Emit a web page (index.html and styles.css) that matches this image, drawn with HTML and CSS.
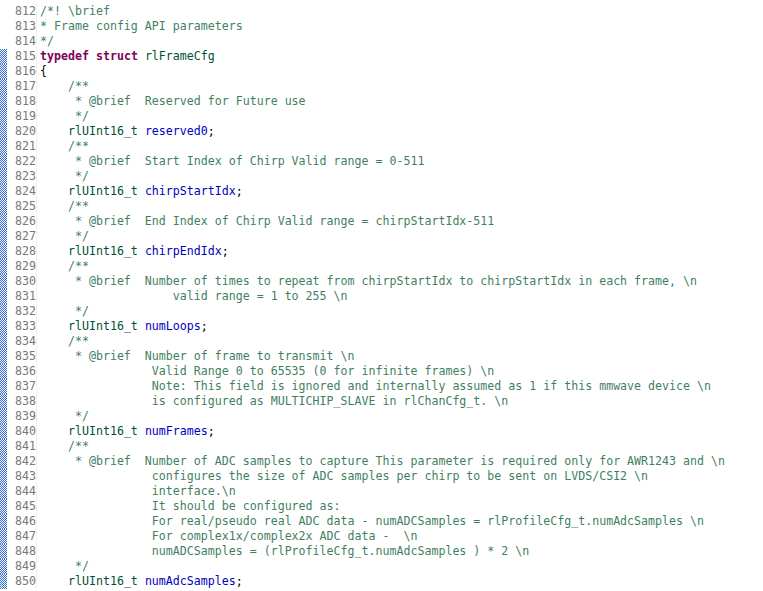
FILE: index.html
```html
<!DOCTYPE html>
<html>
<head>
<meta charset="utf-8">
<link rel="stylesheet" href="styles.css">
</head>
<body>
<div class="listing">
<div class="line"><span class="mark"></span><span class="num">812</span><span class="code"><span class="c">/*! \brief</span></span></div>
<div class="line"><span class="mark"></span><span class="num">813</span><span class="code"><span class="c">* Frame config API parameters</span></span></div>
<div class="line"><span class="mark"></span><span class="num">814</span><span class="code"><span class="c">*/</span></span></div>
<div class="line hl"><span class="mark"></span><span class="num">815</span><span class="code"><span class="k">typedef</span> <span class="k">struct</span> <span class="t">rlFrameCfg</span></span></div>
<div class="line hl"><span class="mark"></span><span class="num">816</span><span class="code">{</span></div>
<div class="line hl"><span class="mark"></span><span class="num">817</span><span class="code"><span class="c">    /**</span></span></div>
<div class="line hl"><span class="mark"></span><span class="num">818</span><span class="code"><span class="c">     * @brief  Reserved for Future use</span></span></div>
<div class="line hl"><span class="mark"></span><span class="num">819</span><span class="code"><span class="c">     */</span></span></div>
<div class="line hl"><span class="mark"></span><span class="num">820</span><span class="code">    <span class="t">rlUInt16_t</span> <span class="f">reserved0</span>;</span></div>
<div class="line hl"><span class="mark"></span><span class="num">821</span><span class="code"><span class="c">    /**</span></span></div>
<div class="line hl"><span class="mark"></span><span class="num">822</span><span class="code"><span class="c">     * @brief  Start Index of Chirp Valid range = 0-511</span></span></div>
<div class="line hl"><span class="mark"></span><span class="num">823</span><span class="code"><span class="c">     */</span></span></div>
<div class="line hl"><span class="mark"></span><span class="num">824</span><span class="code">    <span class="t">rlUInt16_t</span> <span class="f">chirpStartIdx</span>;</span></div>
<div class="line hl"><span class="mark"></span><span class="num">825</span><span class="code"><span class="c">    /**</span></span></div>
<div class="line hl"><span class="mark"></span><span class="num">826</span><span class="code"><span class="c">     * @brief  End Index of Chirp Valid range = chirpStartIdx-511</span></span></div>
<div class="line hl"><span class="mark"></span><span class="num">827</span><span class="code"><span class="c">     */</span></span></div>
<div class="line hl"><span class="mark"></span><span class="num">828</span><span class="code">    <span class="t">rlUInt16_t</span> <span class="f">chirpEndIdx</span>;</span></div>
<div class="line hl"><span class="mark"></span><span class="num">829</span><span class="code"><span class="c">    /**</span></span></div>
<div class="line hl"><span class="mark"></span><span class="num">830</span><span class="code"><span class="c">     * @brief  Number of times to repeat from chirpStartIdx to chirpStartIdx in each frame, \n</span></span></div>
<div class="line hl"><span class="mark"></span><span class="num">831</span><span class="code"><span class="c">                   valid range = 1 to 255 \n</span></span></div>
<div class="line hl"><span class="mark"></span><span class="num">832</span><span class="code"><span class="c">     */</span></span></div>
<div class="line hl"><span class="mark"></span><span class="num">833</span><span class="code">    <span class="t">rlUInt16_t</span> <span class="f">numLoops</span>;</span></div>
<div class="line hl"><span class="mark"></span><span class="num">834</span><span class="code"><span class="c">    /**</span></span></div>
<div class="line hl"><span class="mark"></span><span class="num">835</span><span class="code"><span class="c">     * @brief  Number of frame to transmit \n</span></span></div>
<div class="line hl"><span class="mark"></span><span class="num">836</span><span class="code"><span class="c">                Valid Range 0 to 65535 (0 for infinite frames) \n</span></span></div>
<div class="line hl"><span class="mark"></span><span class="num">837</span><span class="code"><span class="c">                Note: This field is ignored and internally assumed as 1 if this mmwave device \n</span></span></div>
<div class="line hl"><span class="mark"></span><span class="num">838</span><span class="code"><span class="c">                is configured as MULTICHIP_SLAVE in rlChanCfg_t. \n</span></span></div>
<div class="line hl"><span class="mark"></span><span class="num">839</span><span class="code"><span class="c">     */</span></span></div>
<div class="line hl"><span class="mark"></span><span class="num">840</span><span class="code">    <span class="t">rlUInt16_t</span> <span class="f">numFrames</span>;</span></div>
<div class="line hl"><span class="mark"></span><span class="num">841</span><span class="code"><span class="c">    /**</span></span></div>
<div class="line hl"><span class="mark"></span><span class="num">842</span><span class="code"><span class="c">     * @brief  Number of ADC samples to capture This parameter is required only for AWR1243 and \n</span></span></div>
<div class="line hl"><span class="mark"></span><span class="num">843</span><span class="code"><span class="c">                configures the size of ADC samples per chirp to be sent on LVDS/CSI2 \n</span></span></div>
<div class="line hl"><span class="mark"></span><span class="num">844</span><span class="code"><span class="c">                interface.\n</span></span></div>
<div class="line hl"><span class="mark"></span><span class="num">845</span><span class="code"><span class="c">                It should be configured as:</span></span></div>
<div class="line hl"><span class="mark"></span><span class="num">846</span><span class="code"><span class="c">                For real/pseudo real ADC data - numADCSamples = rlProfileCfg_t.numAdcSamples \n</span></span></div>
<div class="line hl"><span class="mark"></span><span class="num">847</span><span class="code"><span class="c">                For complex1x/complex2x ADC data -  \n</span></span></div>
<div class="line hl"><span class="mark"></span><span class="num">848</span><span class="code"><span class="c">                numADCSamples = (rlProfileCfg_t.numAdcSamples ) * 2 \n</span></span></div>
<div class="line hl"><span class="mark"></span><span class="num">849</span><span class="code"><span class="c">     */</span></span></div>
<div class="line hl"><span class="mark"></span><span class="num">850</span><span class="code">    <span class="t">rlUInt16_t</span> <span class="f">numAdcSamples</span>;</span></div>
</div>
</body>
</html>
```
FILE: styles.css
```css
html, body {
  margin: 0;
  padding: 0;
  background: #ffffff;
}
.listing {
  padding-top: 4px;
  font-family: "DejaVu Sans Mono", "Liberation Mono", monospace;
  font-size: 11.62px;
  color: #000000;
}
.line {
  display: flex;
  height: 15px;
  line-height: 15px;
  white-space: pre;
}
.mark {
  width: 7px;
  flex: none;
}
.hl .mark {
  background-color: #2f68d8;
  background-image: url("data:image/svg+xml,%3Csvg xmlns='http://www.w3.org/2000/svg' width='2' height='2' shape-rendering='crispEdges'%3E%3Crect x='1' y='0' width='1' height='1' fill='white'/%3E%3Crect x='0' y='1' width='1' height='1' fill='white'/%3E%3C/svg%3E");
  background-size: 2px 2px;
  background-repeat: repeat;
}
.num {
  width: 29px;
  flex: none;
  text-align: right;
  color: #787878;
  border-right: 1px solid #f0f0f0;
}
.code {
  padding-left: 3px;
}
.c { color: #3f7f5f; }
.k { color: #7f0055; font-weight: bold; }
.t { color: #005032; }
.f { color: #0000c0; }
```
